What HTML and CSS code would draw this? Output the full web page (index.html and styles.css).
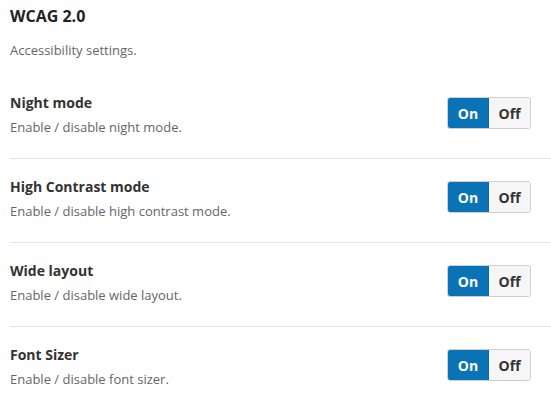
FILE: index.html
```html
<!DOCTYPE html>
<html>
<head>
<meta charset="utf-8">
<link rel="stylesheet" href="styles.css">
</head>
<body>
<div class="panel">
  <h1 class="title">WCAG 2.0</h1>
  <p class="intro">Accessibility settings.</p>
  <div class="rows">
    <div class="row">
      <div class="info">
        <div class="name">Night mode</div>
        <div class="desc">Enable / disable night mode.</div>
      </div>
      <div class="toggle"><span class="opt on">On</span><span class="opt off">Off</span></div>
    </div>
    <div class="row">
      <div class="info">
        <div class="name">High Contrast mode</div>
        <div class="desc">Enable / disable high contrast mode.</div>
      </div>
      <div class="toggle"><span class="opt on">On</span><span class="opt off">Off</span></div>
    </div>
    <div class="row">
      <div class="info">
        <div class="name">Wide layout</div>
        <div class="desc">Enable / disable wide layout.</div>
      </div>
      <div class="toggle"><span class="opt on">On</span><span class="opt off">Off</span></div>
    </div>
    <div class="row">
      <div class="info">
        <div class="name">Font Sizer</div>
        <div class="desc">Enable / disable font sizer.</div>
      </div>
      <div class="toggle"><span class="opt on">On</span><span class="opt off">Off</span></div>
    </div>
  </div>
</div>
</body>
</html>
```
FILE: styles.css
```css
html, body {
  margin: 0;
  padding: 0;
  background: #fff;
}
body {
  font-family: "Open Sans", "Liberation Sans", sans-serif;
  color: #333;
}
.panel {
  padding: 5px 0 0 10px;
}
.title {
  margin: 0;
  font-size: 16px;
  line-height: 22px;
  font-weight: 700;
  color: #222;
}
.intro {
  margin: 13px 0 0;
  font-size: 13px;
  line-height: 20px;
  color: #666;
}
.rows {
  margin-top: 15px;
}
.row {
  display: flex;
  align-items: center;
  justify-content: space-between;
  padding: 18px 20px 21px 0;
  border-bottom: 1px solid #e3e3e3;
}
.row:last-child {
  border-bottom: none;
}
.name {
  font-size: 14px;
  line-height: 20px;
  font-weight: 700;
  color: #333;
}
.desc {
  margin-top: 4px;
  font-size: 13px;
  line-height: 20px;
  color: #666;
}
.toggle {
  display: flex;
  height: 32px;
  margin-bottom: 4px;
  box-sizing: border-box;
  border: 1px solid #cfcfcf;
  border-radius: 3px;
  overflow: hidden;
}
.opt {
  display: flex;
  align-items: center;
  justify-content: center;
  font-size: 14px;
  font-weight: 700;
}
.on {
  width: 40px;
  background: #0a73b6;
  color: #fff;
  margin: -1px 0 -1px -1px;
  border: 1px solid #0a6aa8;
}
.off {
  width: 41px;
  background: #f6f6f6;
  color: #333;
}
```
